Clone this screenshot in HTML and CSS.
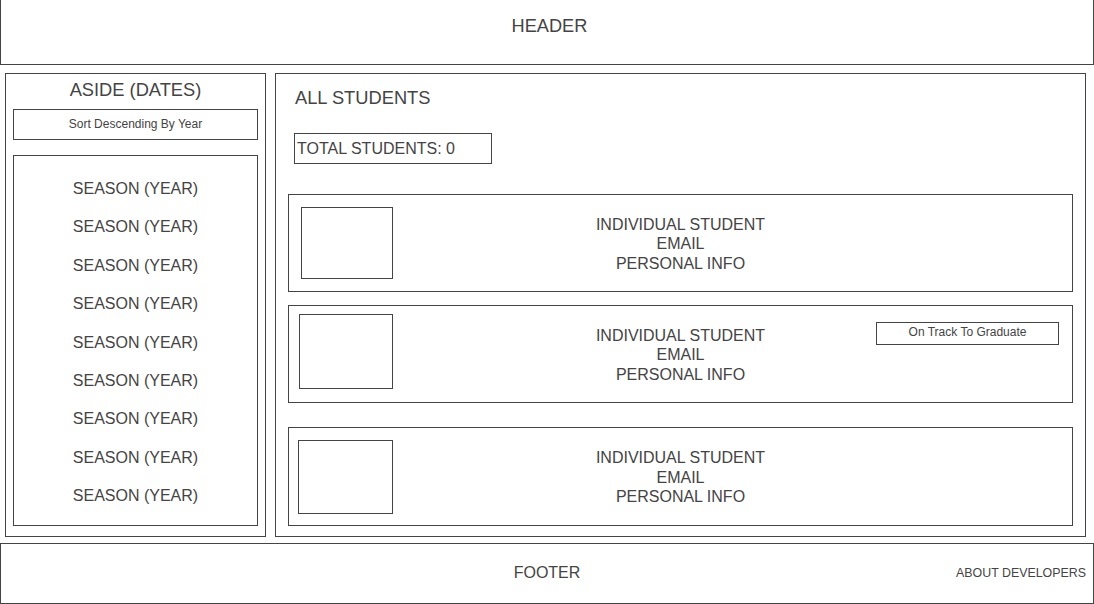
FILE: index.html
```html
<!DOCTYPE html>
<html>
<head>
<meta charset="utf-8">
<link rel="stylesheet" href="styles.css">
</head>
<body>
<header class="site-header"><span class="header-title">HEADER</span></header>
<div class="middle">
  <aside class="aside">
    <div class="aside-title">ASIDE (DATES)</div>
    <div class="sort-btn">Sort Descending By Year</div>
    <ul class="season-list">
      <li>SEASON (YEAR)</li>
      <li>SEASON (YEAR)</li>
      <li>SEASON (YEAR)</li>
      <li>SEASON (YEAR)</li>
      <li>SEASON (YEAR)</li>
      <li>SEASON (YEAR)</li>
      <li>SEASON (YEAR)</li>
      <li>SEASON (YEAR)</li>
      <li>SEASON (YEAR)</li>
    </ul>
  </aside>
  <main class="main">
    <h1 class="main-title">ALL STUDENTS</h1>
    <div class="total">TOTAL STUDENTS: 0</div>
    <div class="card card-1">
      <div class="photo"></div>
      <div class="info">INDIVIDUAL STUDENT<br>EMAIL<br>PERSONAL INFO</div>
      <div class="side"></div>
    </div>
    <div class="card card-2">
      <div class="photo"></div>
      <div class="info">INDIVIDUAL STUDENT<br>EMAIL<br>PERSONAL INFO</div>
      <div class="side"><div class="badge">On Track To Graduate</div></div>
    </div>
    <div class="card card-3">
      <div class="photo"></div>
      <div class="info">INDIVIDUAL STUDENT<br>EMAIL<br>PERSONAL INFO</div>
      <div class="side"></div>
    </div>
  </main>
</div>
<footer class="site-footer">
  <div></div>
  <div class="footer-title">FOOTER</div>
  <div class="about">ABOUT DEVELOPERS</div>
</footer>
</body>
</html>
```
FILE: styles.css
```css
* { box-sizing: border-box; }
html, body { margin: 0; padding: 0; background: #fff; }
body {
  width: 1094px;
  height: 604px;
  overflow: hidden;
  font-family: "Liberation Sans", Arial, sans-serif;
  color: #444;
}
.site-header {
  height: 65px;
  border-left: 1px solid #444;
  border-right: 1px solid #444;
  border-bottom: 1px solid #444;
  display: flex;
  justify-content: center;
  padding-left: 5px;
  padding-top: 16px;
}
.header-title { font-size: 18.2px; line-height: 20px; }

.middle {
  display: flex;
  gap: 9px;
  margin-top: 8px;
  padding-left: 5px;
  height: 464px;
}
.aside {
  width: 261px;
  height: 464px;
  border: 1px solid #444;
  padding: 0 7px;
  display: flex;
  flex-direction: column;
}
.aside-title {
  margin-top: 6px;
  font-size: 18.3px;
  line-height: 20px;
  text-align: center;
}
.sort-btn {
  margin-top: 9px;
  height: 31px;
  border: 1px solid #444;
  font-size: 12px;
  display: flex;
  align-items: center;
  justify-content: center;
  padding-bottom: 1px;
}
.season-list {
  list-style: none;
  margin: 15px 0 0;
  padding: 14px 0 0;
  height: 371px;
  border: 1px solid #444;
}
.season-list li {
  height: 38.4px;
  line-height: 38.4px;
  font-size: 16px;
  text-align: center;
}

.main {
  width: 811px;
  height: 464px;
  border: 1px solid #444;
  display: flex;
  flex-direction: column;
  align-items: flex-start;
}
.main-title {
  margin: 14px 0 0 19px;
  font-size: 18.3px;
  line-height: 20px;
  font-weight: normal;
}
.total {
  margin: 25px 0 0 18px;
  width: 198px;
  height: 31px;
  border: 1px solid #444;
  padding-left: 2px;
  font-size: 16px;
  display: flex;
  align-items: center;
}
.card {
  margin-left: 12px;
  width: 785px;
  height: 98px;
  border: 1px solid #444;
  display: grid;
  grid-template-columns: 1fr auto 1fr;
  align-items: center;
}
.card-1 { margin-top: 30px; }
.card-2 { margin-top: 13px; }
.card-3 { margin-top: 24px; height: 99px; }
.photo {
  border: 1px solid #444;
  align-self: start;
  justify-self: start;
}
.card-1 .photo { width: 92px; height: 72px; margin: 12px 0 0 12px; }
.card-2 .photo { width: 94px; height: 75px; margin: 8px 0 0 10px; }
.card-3 .photo { width: 95px; height: 74px; margin: 12px 0 0 9px; }
.info {
  text-align: center;
  font-size: 16px;
  line-height: 19.5px;
  padding-top: 2px;
}
.side { align-self: start; justify-self: end; }
.badge {
  margin: 16px 13px 0 0;
  width: 183px;
  height: 23px;
  border: 1px solid #444;
  font-size: 12px;
  display: flex;
  align-items: center;
  justify-content: center;
  padding-bottom: 3px;
}

.site-footer {
  margin-top: 6px;
  height: 61px;
  border: 1px solid #444;
  display: grid;
  grid-template-columns: 1fr auto 1fr;
  align-items: center;
  padding-bottom: 2px;
}
.footer-title { font-size: 16px; line-height: 20px; }
.about {
  justify-self: end;
  padding-right: 7px;
  font-size: 12.4px;
}
```
